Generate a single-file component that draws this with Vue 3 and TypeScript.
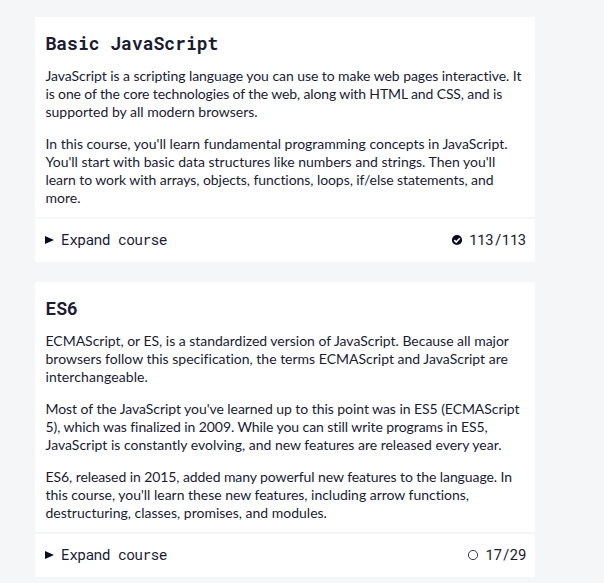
<script setup lang="ts">
interface Line { text: string; tracking: number }
interface Course { title: string; paragraphs: Line[][]; done: number; total: number }

const line = (text: string, tracking = 0): Line => ({ text, tracking })

const courses: Course[] = [
  {
    title: 'Basic JavaScript',
    paragraphs: [
      [
        line('JavaScript is a scripting language you can use to make web pages interactive. It', -0.06),
        line('is one of the core technologies of the web, along with HTML and CSS, and is', -0.132),
        line('supported by all modern browsers.'),
      ],
      [
        line("In this course, you'll learn fundamental programming concepts in JavaScript."),
        line("You'll start with basic data structures like numbers and strings. Then you'll"),
        line('learn to work with arrays, objects, functions, loops, if/else statements, and', -0.065),
        line('more.'),
      ],
    ],
    done: 113,
    total: 113,
  },
  {
    title: 'ES6',
    paragraphs: [
      [
        line('ECMAScript, or ES, is a standardized version of JavaScript. Because all major', -0.02),
        line('browsers follow this specification, the terms ECMAScript and JavaScript are'),
        line('interchangeable.', 0.1),
      ],
      [
        line("Most of the JavaScript you've learned up to this point was in ES5 (ECMAScript", -0.055),
        line('5), which was finalized in 2009. While you can still write programs in ES5,', -0.075),
        line('JavaScript is constantly evolving, and new features are released every year.'),
      ],
      [
        line('ES6, released in 2015, added many powerful new features to the language. In', -0.08),
        line("this course, you'll learn these new features, including arrow functions,", -0.02),
        line('destructuring, classes, promises, and modules.'),
      ],
    ],
    done: 17,
    total: 29,
  },
]
</script>

<template>
  <main class="page">
    <section v-for="course in courses" :key="course.title" class="card">
      <div class="intro">
        <h2>{{ course.title }}</h2>
        <p v-for="(lines, i) in course.paragraphs" :key="i">
          <span v-for="item in lines" :key="item.text" class="line" :style="{ letterSpacing: item.tracking + 'px' }">{{ item.text }}</span>
        </p>
      </div>
      <button class="toggle" type="button">
        <svg class="caret" viewBox="0 0 10 8"><path d="M0 0 9 4 0 8Z" /></svg>
        <span class="label">Expand course</span>
        <svg class="status" viewBox="0 0 12 12">
          <template v-if="course.done === course.total">
            <circle cx="6" cy="6" r="5.1" class="fill" />
            <path d="M3.3 6.1 5.2 8 8.8 4.3" class="tick" />
          </template>
          <circle v-else cx="6" cy="6" r="4.6" class="ring" />
        </svg>
        <span>{{ course.done }}/{{ course.total }}</span>
      </button>
    </section>
  </main>
</template>

<style>
body { margin: 0; background: #f5f6f7; overflow: hidden; }
</style>
<style scoped>
.page { box-sizing: border-box; height: 583px; padding: 17px 69px 0 35px; color: #1b1b32; background: #f5f6f7; overflow: hidden; }
.card { width: 500px; margin-bottom: 20px; background: #fff; }
.intro { padding: 14px 10px 10px 10.5px; border-bottom: 2px solid #f5f6f7; }
h2 { margin: 0 0 12px; font: 700 18px/24px "Roboto Mono", "DejaVu Sans Mono", monospace; }
p { margin: 0 0 14px; font: 400 14px/18px Lato, sans-serif; font-variant-ligatures: none; }
p:last-child { margin-bottom: 0; }
.line { display: block; white-space: nowrap; }
.toggle { box-sizing: border-box; display: flex; align-items: center; width: 100%; height: 43px; padding: 0 9px 1px 10px; border: 0; background: none; color: inherit; font: 400 14.6px/20px "Roboto Mono", "DejaVu Sans Mono", monospace; letter-spacing: -0.61px; }
.caret { width: 10px; height: 8px; margin-right: 6px; fill: #0a0a23; }
.label { margin-right: auto; }
.status { width: 12px; height: 12px; margin-right: 6px; }
.fill { fill: #0a0a23; }
.tick { fill: none; stroke: #fff; stroke-width: 1.6; }
.ring { fill: none; stroke: #0a0a23; stroke-width: 0.8; }
</style>
